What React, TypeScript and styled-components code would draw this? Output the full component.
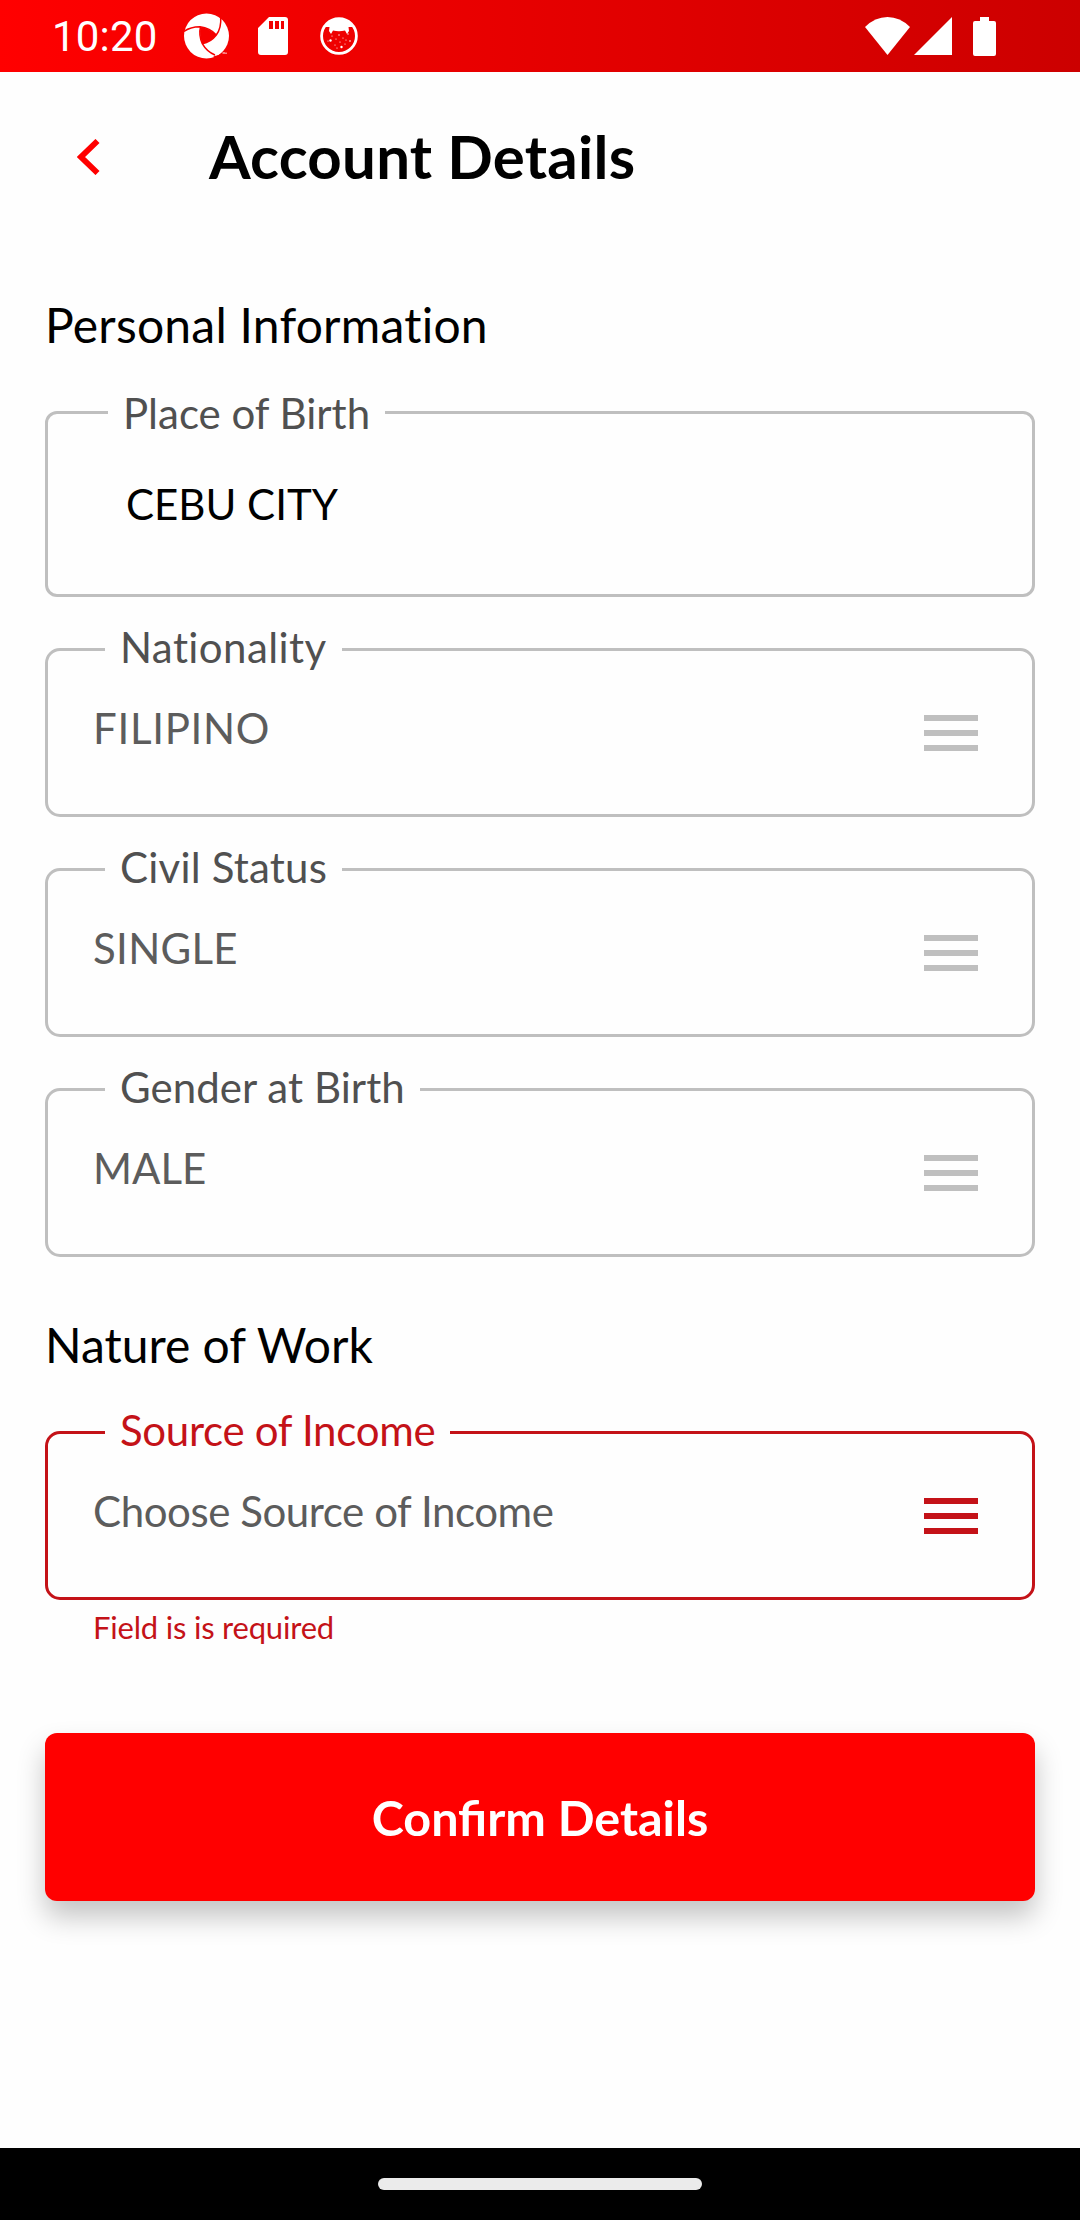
import React from "react";
import styled, { createGlobalStyle } from "styled-components";

const Global = createGlobalStyle`
  *, *::before, *::after { box-sizing: border-box; }
  body { margin: 0; background: #fff; font-family: Lato, "Open Sans", sans-serif; font-variant-ligatures: none; }
`;

const Screen = styled.div`
  width: 1080px;
  height: 2220px;
  display: flex;
  flex-direction: column;
  background: #fefefe;
  color: #000;
`;

const StatusBar = styled.div`
  height: 72px;
  flex: none;
  display: flex;
  align-items: center;
  justify-content: space-between;
  padding: 0 84px 0 52px;
  background: linear-gradient(to right, #ff0000, #cc0000);
`;

const StatusGroup = styled.div`
  display: flex;
  align-items: center;
`;

const Clock = styled.span`
  width: 130px;
  font: 400 42px/72px Roboto, sans-serif;
  letter-spacing: 0.2px;
  padding-top: 2px;
  color: #fff;
`;

const StatusIcon = styled.svg<{ $gap?: number }>`
  display: block;
  flex: none;
  margin-left: ${(p) => p.$gap ?? 0}px;
`;

const Header = styled.header`
  height: 168px;
  flex: none;
  display: flex;
  align-items: center;
  padding: 0 0 0 60px;
`;

const BackButton = styled.button`
  width: 149px;
  height: 72px;
  padding: 2px 0 0;
  border: 0;
  background: none;
  display: flex;
  align-items: center;
`;

const Title = styled.h1`
  margin: 0;
  font-size: 60px;
  line-height: 72px;
  font-weight: 700;
  letter-spacing: 0.25px;
`;

const Form = styled.main`
  flex: 1;
  display: flex;
  flex-direction: column;
  padding: 55px 45px 0;
`;

const SectionTitle = styled.h2<{ $top?: number; $bottom: number; $tracking?: number }>`
  margin: ${(p) => p.$top ?? 0}px 0 ${(p) => p.$bottom}px;
  font-size: 48px;
  line-height: 60px;
  font-weight: 400;
  letter-spacing: ${(p) => p.$tracking ?? 0}px;
`;

const FieldBox = styled.div<{ $tall?: boolean; $error?: boolean }>`
  height: ${(p) => (p.$tall ? 186 : 169)}px;
  flex: none;
  display: flex;
  flex-direction: column;
  align-items: flex-start;
  border: 3px solid ${(p) => (p.$error ? "#c41218" : "#bfbfbf")};
  border-radius: ${(p) => (p.$tall ? 12 : 15)}px;
  padding-left: ${(p) => (p.$tall ? 60 : 57)}px;
`;

const FieldLabel = styled.label<{ $error?: boolean; $tall?: boolean; $tracking?: number }>`
  margin-top: ${(p) => (p.$tall ? -28 : -31)}px;
  padding: 0 15px;
  font-size: 42px;
  line-height: 54px;
  letter-spacing: ${(p) => p.$tracking ?? 0}px;
  background: #fefefe;
  color: ${(p) => (p.$error ? "#c41218" : "#505050")};
`;

const FieldRow = styled.div<{ $tall?: boolean }>`
  align-self: stretch;
  display: flex;
  justify-content: space-between;
  align-items: center;
  margin: ${(p) => (p.$tall ? "37px 0 0 18px" : "27px 54px 0 -12px")};
`;

const Value = styled.span<{ $dark?: boolean; $tracking?: number }>`
  font-size: 42px;
  line-height: 54px;
  letter-spacing: ${(p) => p.$tracking ?? 0}px;
  color: ${(p) => (p.$dark ? "#000" : "#5c5c5c")};
`;

const Menu = styled.span<{ $error?: boolean }>`
  width: 54px;
  height: 36px;
  margin-top: 10px;
  display: flex;
  flex-direction: column;
  justify-content: space-between;

  i {
    height: 6px;
    background: ${(p) => (p.$error ? "#c41218" : "#bfbfbf")};
  }
`;

const Stack = styled.div`
  display: flex;
  flex-direction: column;
  gap: 51px;
`;

const ErrorText = styled.p`
  margin: 7px 0 0 48px;
  font-size: 31px;
  line-height: 40px;
  letter-spacing: -0.2px;
  color: #c41218;
`;

const Confirm = styled.button`
  height: 168px;
  flex: none;
  margin-top: 86px;
  padding: 0;
  border: 0;
  border-radius: 12px;
  background: #ff0000;
  color: #fff;
  font: 700 48.500px/60px Lato, sans-serif;
  font-variant-ligatures: normal;
  box-shadow: 0 16px 28px rgba(0, 0, 0, 0.23);
`;

const NavBar = styled.div`
  height: 72px;
  flex: none;
  display: flex;
  align-items: center;
  justify-content: center;
  background: #000;
`;

const Pill = styled.div`
  width: 324px;
  height: 12px;
  border-radius: 6px;
  background: #ebebeb;
`;

type SelectProps = {
  label: string;
  value: string;
  error?: boolean;
  labelTracking?: number;
  valueTracking?: number;
};

const SelectField = ({ label, value, error, labelTracking, valueTracking }: SelectProps) => (
  <FieldBox $error={error}>
    <FieldLabel $error={error} $tracking={labelTracking}>{label}</FieldLabel>
    <FieldRow>
      <Value $tracking={valueTracking}>{value}</Value>
      <Menu $error={error}>
        <i />
        <i />
        <i />
      </Menu>
    </FieldRow>
  </FieldBox>
);

const specks: [number, number, number][] = [
  [12, 19, 0.6], [16, 22, 0.6], [19, 18, 0.7], [23, 21, 0.6], [28, 17, 0.7], [8, 24, 0.6],
  [10.5, 23.5, 1.2], [15, 28, 0.6], [20, 25, 0.6], [21.5, 30, 1.2], [25, 27, 0.6],
  [17, 31, 0.6], [30, 24, 0.8], [26, 23, 0.6],
];

export default function App() {
  return (
    <Screen>
      <Global />
      <StatusBar>
        <StatusGroup>
          <Clock>10:20</Clock>
          <StatusIcon $gap={2} width="45" height="46" viewBox="0 0 45 46">
            <circle cx="22.5" cy="23" r="22.5" fill="#fff" />
            <path d="M16.500 14Q25 15 32.300 22Q27 29 18.300 30.700Q15 22 16.500 14Z" fill="#f60000" />
            <g fill="none" stroke="#f60000" strokeWidth="1.5">
              <path d="M0 18.500Q6 14 16 13.800Q26 15 32.300 22" />
              <path d="M36.700 4Q37.500 15 32.300 22Q27 29 18.300 30.700" />
              <path d="M16.500 14Q14.500 22 18.300 30.700Q23 39 31 42" />
            </g>
            <path d="M29 43Q35 43 39 38.500L45 40L34 46Z" fill="#f60000" />
            <path d="M38.500 40H41M42 41V39.500" stroke="#fff" strokeWidth="1" />
          </StatusIcon>
          <StatusIcon $gap={29} width="30" height="38" viewBox="0 0 30 38">
            <path fill="#fff" fillRule="evenodd" d="M11 0H27Q30 0 30 3V35Q30 38 27 38H3Q0 38 0 35V11ZM11 4V12H15V4ZM17 4V12H21V4ZM23 4V12H26V4Z" />
          </StatusIcon>
          <StatusIcon $gap={32} width="38" height="38" viewBox="0 0 38 38">
            <circle cx="19" cy="19" r="17.4" fill="none" stroke="#fff" strokeWidth="2.8" />
            <path d="M3 12Q8 1 19 1Q30 1 35 12L33.500 10H28.500L29 14L27 17L25 13.500Q19 15 13 13.500L11 17L9 14L9.500 10H4.500Z" fill="#fff" />
            {specks.map(([x, y, r]) => (
              <circle key={`${x}-${y}`} cx={x} cy={y} r={r} fill="#fff" />
            ))}
          </StatusIcon>
        </StatusGroup>
        <StatusGroup>
          <StatusIcon width="45" height="38" viewBox="0 0 45 38">
            <path d="M0 10Q10 0 22.500 0Q35 0 45 10L22.500 38Z" fill="#fff" />
          </StatusIcon>
          <StatusIcon $gap={4} width="38" height="38" viewBox="0 0 38 38">
            <path d="M38 0V38H0Z" fill="#fff" />
          </StatusIcon>
          <StatusIcon $gap={21} width="23" height="39" viewBox="0 0 23 39">
            <path d="M7 0H16V4H21Q23 4 23 6V37Q23 39 21 39H2Q0 39 0 37V6Q0 4 2 4H7Z" fill="#fff" />
          </StatusIcon>
        </StatusGroup>
      </StatusBar>
      <Header>
        <BackButton aria-label="Back">
          <StatusIcon $gap={17} width="23" height="36" viewBox="0 0 23 36">
            <path d="M20.500 2L4 18L20.500 34" fill="none" stroke="#ff0000" strokeWidth="5.8" />
          </StatusIcon>
        </BackButton>
        <Title>Account Details</Title>
      </Header>
      <Form>
        <SectionTitle $bottom={56} $tracking={0.22}>Personal Information</SectionTitle>
        <Stack>
          <FieldBox $tall>
            <FieldLabel $tall>Place of Birth</FieldLabel>
            <FieldRow $tall>
              <Value $dark>CEBU CITY</Value>
            </FieldRow>
          </FieldBox>
          <SelectField label="Nationality" value="FILIPINO" labelTracking={0.42} valueTracking={0.7} />
          <SelectField label="Civil Status" value="SINGLE" labelTracking={0.2} valueTracking={0.3} />
          <SelectField label="Gender at Birth" value="MALE" labelTracking={0.06} />
        </Stack>
        <SectionTitle $top={58} $bottom={56}>Nature of Work</SectionTitle>
        <SelectField
          label="Source of Income"
          value="Choose Source of Income"
          labelTracking={-0.3}
          valueTracking={-0.43}
          error
        />
        <ErrorText>Field is is required</ErrorText>
        <Confirm>Confirm Details</Confirm>
      </Form>
      <NavBar>
        <Pill />
      </NavBar>
    </Screen>
  );
}
